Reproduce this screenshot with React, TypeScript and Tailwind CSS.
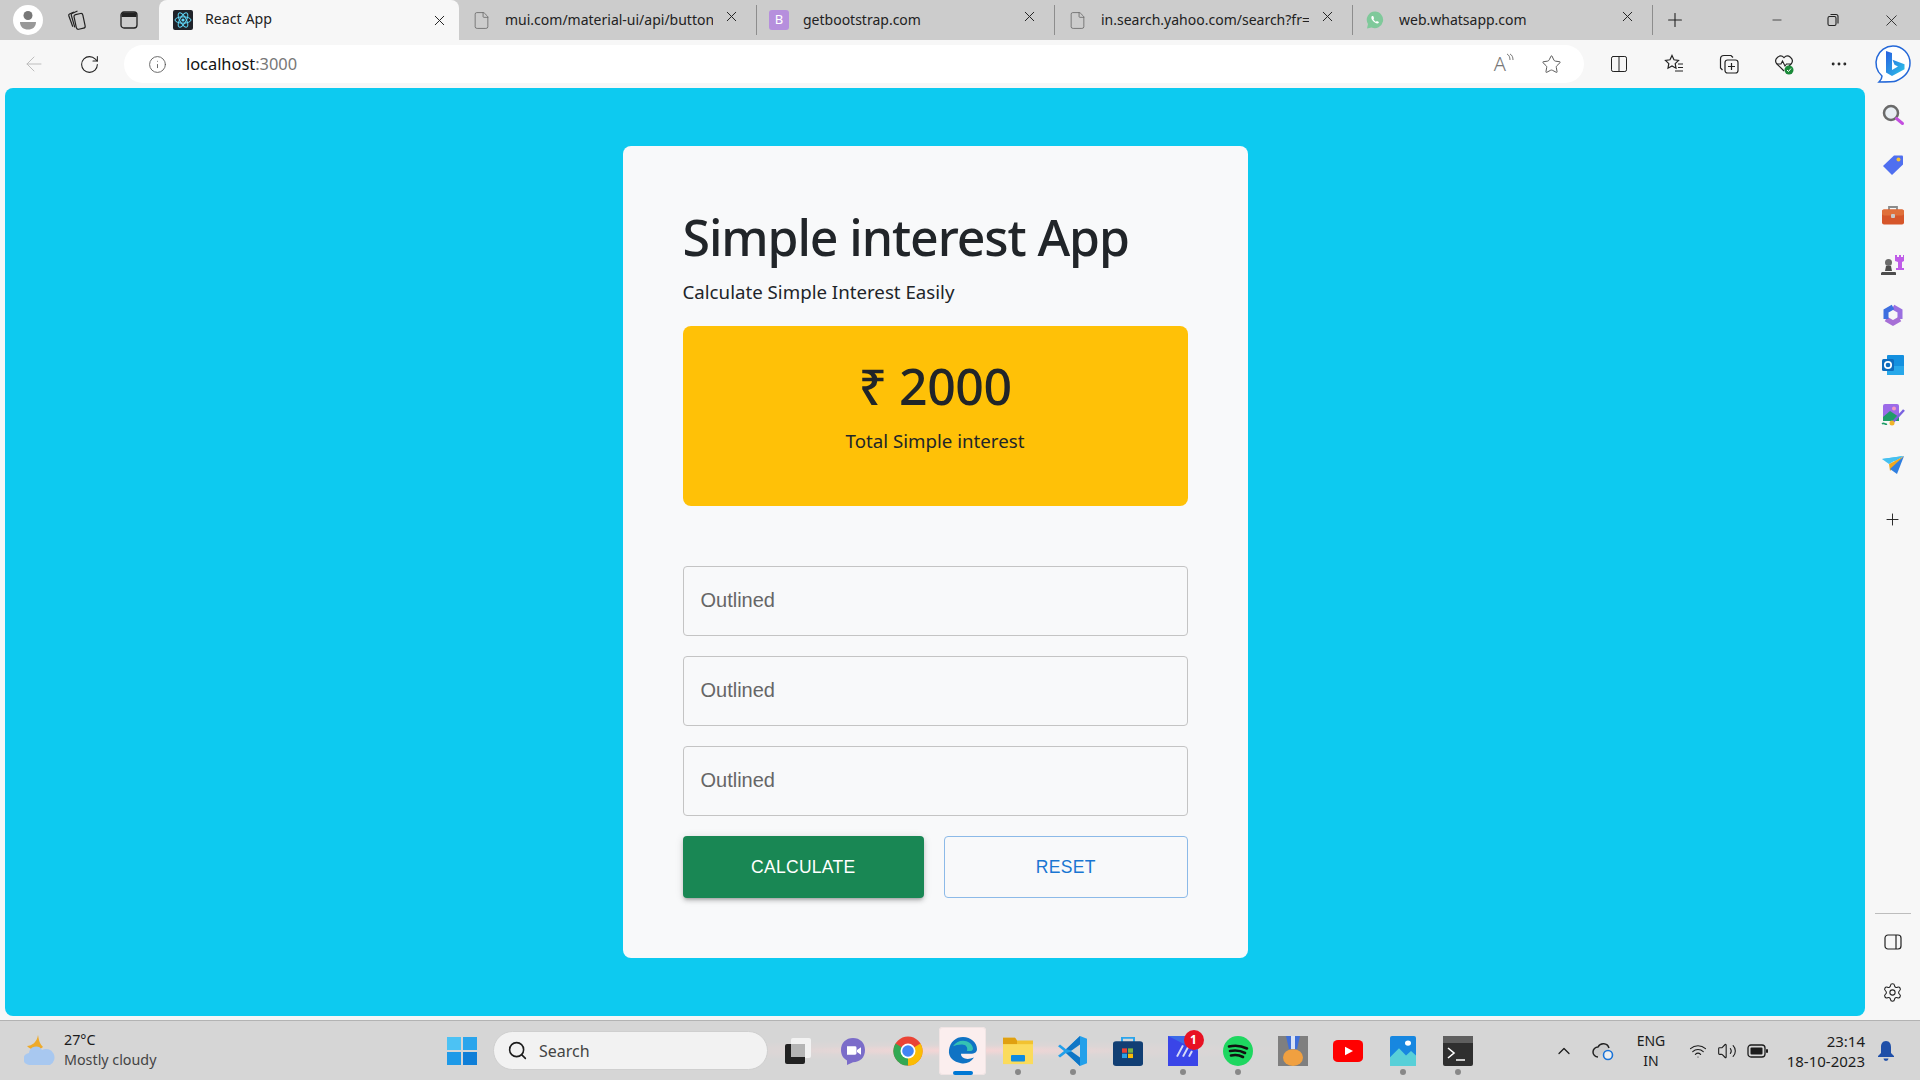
import { ArrowLeft, RotateCw, Info, Star, X, Plus, Minus, File, Search, ChevronUp, Wifi, Volume2, Settings, Ellipsis, Columns2 } from "lucide-react";

const ui = "font-['Noto_Sans',sans-serif]";

function ReactLogo() {
  return (
    <svg width="20" height="20" viewBox="0 0 20 20">
      <rect width="20" height="20" rx="2" fill="#20232a" />
      <g fill="none" stroke="#61dafb" strokeWidth="1">
        <ellipse cx="10" cy="10" rx="8" ry="3.2" />
        <ellipse cx="10" cy="10" rx="8" ry="3.2" transform="rotate(60 10 10)" />
        <ellipse cx="10" cy="10" rx="8" ry="3.2" transform="rotate(120 10 10)" />
      </g>
      <circle cx="10" cy="10" r="1.6" fill="#61dafb" />
    </svg>
  );
}

function WhatsappLogo() {
  return (
    <svg width="20" height="20" viewBox="0 0 20 20">
      <path d="M10 1.500a8.300 8.300 0 0 0-7 12.600L2 18.500l4.500-1.100A8.300 8.300 0 1 0 10 1.500z" fill="#7fc99a" />
      <path d="M7 6c-1 1-.9 2.700.6 4.600 1.500 1.800 3.300 3 4.900 2.900.8-.1 1.400-.8 1.400-1.500l-2-1-.9.8c-1-.4-2-1.400-2.600-2.600l.7-.9-.9-2.200z" fill="#fff" />
    </svg>
  );
}

function Tab({ label, icon, wide }: { label: string; icon: React.ReactNode; wide?: boolean }) {
  return (
    <div className={`flex h-[40px] items-center border-r border-[#8d8d8d] [border-image:linear-gradient(transparent_15%,#8d8d8d_15%,#8d8d8d_85%,transparent_85%)_1] pl-[12px] pr-[16px] ${wide ? "w-[300px]" : "w-[298px]"}`}>
      <div className="flex w-[20px] justify-center">{icon}</div>
      <span className="mb-[2px] ml-[14px] w-[208px] overflow-hidden whitespace-nowrap text-[14px] text-[#222]">{label}</span>
      <X size={17} strokeWidth={1.4} className="-mt-[8px] ml-auto text-[#222]" />
    </div>
  );
}

function TabStrip() {
  const doc = <File size={19} strokeWidth={1.1} className="text-[#6d6d6d]" />;
  return (
    <div className="flex h-[40px] items-center bg-[#cccccc]">
      <div className="flex w-[159px] items-center pl-[13px]">
        <div className="flex h-[30px] w-[30px] items-center justify-center rounded-full bg-white">
          <svg width="18" height="22" viewBox="0 0 18 22">
            <circle cx="9" cy="6.500" r="4.500" fill="#777" />
            <path d="M1 13h16c0 5-3.500 7.500-8 7.500S1 18 1 13z" fill="#999" />
          </svg>
        </div>
        <svg width="22" height="22" viewBox="0 0 22 22" fill="none" stroke="#222" strokeWidth="1.200" className="ml-[23px]">
          <rect x="9" y="5" width="9" height="15" rx="2" transform="rotate(-12 13 12)" />
          <path d="M8 3 3.500 5c-.8.4-1 1-.7 1.800l4 11" />
          <path d="M11.500 2 6 4.500c-.8.4-1 1-.7 1.800l3.500 12" />
        </svg>
        <svg width="20" height="20" viewBox="0 0 20 20" className="ml-[31px]">
          <rect x="2" y="2" width="16" height="16" rx="3" fill="none" stroke="#222" strokeWidth="1.300" />
          <path d="M2.500 7V5a2.500 2.500 0 0 1 2.500-2.500h10A2.500 2.500 0 0 1 17.500 5v2z" fill="#222" />
        </svg>
      </div>
      <div className="flex h-[40px] w-[300px] items-center rounded-t-[8px] bg-[#f7f7f7] pl-[14px] pr-[11px]">
        <ReactLogo />
        <span className="mb-[2px] ml-[12px] text-[14.200px] text-[#222]">React App</span>
        <X size={17} strokeWidth={1.4} className="ml-auto text-[#222]" />
      </div>
      <Tab label="mui.com/material-ui/api/button" icon={doc} />
      <Tab
        label="getbootstrap.com"
        icon={<div className="flex h-[20px] w-[20px] items-center justify-center rounded-[3px] bg-[#b68fdd] text-[13px] text-white">B</div>}
      />
      <Tab label="in.search.yahoo.com/search?fr=" icon={doc} />
      <Tab label="web.whatsapp.com" icon={<WhatsappLogo />} wide />
      <Plus size={22} strokeWidth={1.200} className="ml-[11px] text-[#222]" />
      <div className="ml-auto flex items-center text-[#222]">
        <Minus size={14} strokeWidth={1.300} className="mr-[42px]" />
        <svg width="14" height="14" viewBox="0 0 14 14" fill="none" stroke="#222" strokeWidth="1.100" className="mr-[42px]">
          <rect x="2" y="3.500" width="8" height="9" rx="1.500" />
          <path d="M4.500 1.500h5.500a2 2 0 0 1 2 2v7" />
        </svg>
        <X size={19} strokeWidth={1.100} className="mr-[19px]" />
      </div>
    </div>
  );
}

function ToolSlot({ children }: { children: React.ReactNode }) {
  return <div className="flex w-[55px] items-center justify-center">{children}</div>;
}

function Toolbar() {
  return (
    <div className="flex h-[48px] items-center bg-[#f7f7f7]">
      <ArrowLeft size={24} strokeWidth={1} className="ml-[22px] text-[#bdbdbd]" />
      <RotateCw size={21} strokeWidth={1.200} className="ml-[33px] text-[#222]" />
      <div className="ml-[24px] flex h-[38px] w-[1462px] items-center rounded-full bg-white pl-[24px] pr-[22px]">
        <Info size={19} strokeWidth={1.100} className="text-[#555]" />
        <span className="ml-[19px] text-[16.400px] text-[#111]">
          localhost<span className="text-[#777]">:3000</span>
        </span>
        <div className="ml-auto flex items-start text-[#777]">
          <span className="text-[20px] leading-[22px] font-light">A</span>
          <svg width="8" height="12" viewBox="0 0 8 12" fill="none" stroke="#777" strokeWidth="1">
            <path d="M1 1c2 1 3 3 3 6M4 1c2 1 3 3 3 6" />
          </svg>
        </div>
        <Star size={21} strokeWidth={1.100} className="ml-[27px] text-[#555]" />
      </div>
      <div className="ml-[7px] flex items-center">
        <ToolSlot>
          <Columns2 size={20} strokeWidth={1.200} className="text-[#222]" />
        </ToolSlot>
        <ToolSlot>
          <svg width="22" height="22" viewBox="0 0 22 22" fill="none" stroke="#222" strokeWidth="1.200">
            <path d="m9 2.500 2 4.300 4.500.6-3.300 3.200.8 4.600L9 13l-4 2.200.8-4.600L2.500 7.400 7 6.800z" />
            <path d="M15 11h5M15 14.500h5M12 18h8" />
          </svg>
        </ToolSlot>
        <ToolSlot>
          <svg width="22" height="22" viewBox="0 0 22 22" fill="none" stroke="#222" strokeWidth="1.200">
            <rect x="7" y="7" width="13" height="13" rx="2.500" />
            <path d="M13.500 10v7M10 13.500h7M15 4.500 13 2.500H6A3.500 3.500 0 0 0 2.500 6v9l2 2" />
          </svg>
        </ToolSlot>
        <ToolSlot>
          <svg width="24" height="24" viewBox="0 0 24 24" fill="none">
            <path d="M12 19 4.500 11.500A4.800 4.800 0 0 1 12 5.600a4.800 4.800 0 0 1 7.500 5.900L17 14" stroke="#222" strokeWidth="1.200" />
            <path d="M5 12h4l1.500-3 2.500 5 1.500-2h4" stroke="#222" strokeWidth="1.100" />
            <circle cx="17" cy="18" r="4.500" fill="#1b8a3a" />
            <path d="m15 18 1.500 1.500 2.500-3" stroke="#fff" strokeWidth="1" />
          </svg>
        </ToolSlot>
        <ToolSlot>
          <Ellipsis size={20} strokeWidth={1.500} className="text-[#222]" />
        </ToolSlot>
        <div className="-ml-[1px] flex w-[55px] items-center justify-center">
          <svg width="40" height="40" viewBox="0 0 40 40">
            <defs>
              <linearGradient id="bingB" x1="0" y1="0" x2="1" y2="1">
                <stop offset="0" stopColor="#2a5fe0" />
                <stop offset="1" stopColor="#2cc8e8" />
              </linearGradient>
            </defs>
            <path d="M20 2a17 17 0 0 1 17 17c0 9-7 15-14 18-2 1-9 1-17 1 2-2 3-4 3-6A17 17 0 0 1 20 2z" fill="#fff" stroke="#2468d8" strokeWidth="1.500" />
            <path d="M13 7l6 2v17l6-3.500-3.500-1.700-2-5 12 4.500v5L19 32l-6-3.500z" fill="url(#bingB)" />
          </svg>
        </div>
      </div>
    </div>
  );
}

function SidebarIcons() {
  return (
    <div className="flex flex-col items-center pt-[2px]">
      <div className="flex h-[50px] items-center">
        <svg width="24" height="24" viewBox="0 0 24 24" fill="none">
          <circle cx="10" cy="10" r="7" stroke="#6a6a6a" strokeWidth="2.500" fill="#e8eef3" />
          <path d="m15.500 15.500 6 5" stroke="#c44fe0" strokeWidth="3" strokeLinecap="round" />
        </svg>
      </div>
      <div className="flex h-[50px] items-center">
        <svg width="22" height="22" viewBox="0 0 22 22">
          <path d="M12 1.500h8a1 1 0 0 1 1 1v8L10 21 1 12z" fill="#4f6ff0" />
          <circle cx="16.500" cy="5.500" r="2" fill="#f3c13a" />
        </svg>
      </div>
      <div className="flex h-[50px] items-center">
        <svg width="24" height="22" viewBox="0 0 24 22">
          <path d="M8 6V3h8v3" fill="none" stroke="#8b8b8b" strokeWidth="1.800" />
          <rect x="1" y="5.500" width="22" height="15" rx="2" fill="#d6562a" />
          <rect x="1" y="5.500" width="22" height="6" rx="2" fill="#e0703a" />
          <rect x="10" y="10" width="4" height="4" rx="1" fill="#c8c8c8" />
        </svg>
      </div>
      <div className="flex h-[50px] items-center">
        <svg width="24" height="24" viewBox="0 0 24 24">
          <circle cx="7.500" cy="9.500" r="3.500" fill="#6b6b6b" />
          <path d="M5 13h5l1 5H4zM1 19h13a1 1 0 0 1 1 1v2H0v-2z" fill="#4d4d4d" />
          <path d="M14 2h2v2h2V2h2v2h2V2h1v6l-2 1v6h2v2h-8v-2h2V9l-3-1z" fill="#bf5ce8" />
        </svg>
      </div>
      <div className="flex h-[50px] items-center">
        <svg width="22" height="24" viewBox="0 0 22 24" fill="none">
          <path d="M11 4 18 8v8" stroke="#9a6fe0" strokeWidth="5" />
          <path d="M18 16 11 20 4 16" stroke="#a66fd6" strokeWidth="5" />
          <path d="M4 16V8l7-4" stroke="#3d6fe0" strokeWidth="5" />
        </svg>
      </div>
      <div className="flex h-[50px] items-center">
        <svg width="24" height="22" viewBox="0 0 24 22">
          <rect x="6" y="1" width="17" height="20" rx="1" fill="#1490df" />
          <path d="M6 12h17v9H6z" fill="#28a8ea" />
          <rect x="1" y="5" width="12" height="12" rx="1.500" fill="#0f6cbd" />
          <circle cx="7" cy="11" r="3.200" fill="none" stroke="#fff" strokeWidth="1.700" />
        </svg>
      </div>
      <div className="flex h-[50px] items-center">
        <svg width="24" height="24" viewBox="0 0 24 24">
          <rect x="2" y="1" width="16" height="17" rx="2" fill="#9c6ae8" />
          <path d="M2 14 9 8l9 6v4H2z" fill="#1f9d68" />
          <circle cx="13" cy="5.500" r="2" fill="#f49ac1" />
          <path d="M12 19 23 7" stroke="#7a62e0" strokeWidth="2.500" />
          <circle cx="11" cy="20" r="2.500" fill="#f0b429" />
          <path d="M1 21c2-2 3 1 5 0" stroke="#1f9d68" strokeWidth="1.500" fill="none" />
        </svg>
      </div>
      <div className="flex h-[50px] items-center">
        <svg width="24" height="20" viewBox="0 0 24 20">
          <path d="M1 4 23 1l-9 5z" fill="#39b5ec" />
          <path d="M23 1 14 6 8 9 9 16z" fill="#f0a81f" />
          <path d="M23 1 16 19l-7-5z" fill="#2f7fe0" />
          <path d="M1 4 8 9l14-8z" fill="#45c1f0" />
        </svg>
      </div>
      <div className="flex h-[58px] items-center">
        <Plus size={19} strokeWidth={1.200} className="text-[#222]" />
      </div>
    </div>
  );
}

function Field() {
  return (
    <div className="flex h-[70px] items-center rounded-[4px] border border-[#c4c4c4] pb-[2px] pl-[17px] font-['Liberation_Sans',sans-serif] text-[20px] text-[#666]">
      Outlined
    </div>
  );
}

function Card() {
  return (
    <div className="flex w-[625px] flex-col rounded-[8px] bg-[#f8f9fa] p-[60px] text-[#212529]">
      <h1 className="text-[50px] leading-[62px] font-medium tracking-[-1.100px]">Simple interest App</h1>
      <p className="mt-[9px] text-[18.700px] leading-[30px]">Calculate Simple Interest Easily</p>
      <div className="mt-[19px] flex h-[180px] flex-col items-center rounded-[8px] bg-[#ffc107] pt-[30px]">
        <div className="text-[50px] leading-[60px] font-medium tracking-[-0.500px]">₹ 2000</div>
        <div className="mt-[10px] text-[18.700px] leading-[30px]">Total Simple interest</div>
      </div>
      <div className="mt-[60px] flex flex-col gap-[20px]">
        <Field />
        <Field />
        <Field />
      </div>
      <div className="mt-[20px] flex gap-[20px] font-['Liberation_Sans',sans-serif] text-[17.500px] tracking-[0.300px]">
        <button className="flex h-[62px] flex-1 items-center justify-center rounded-[4px] bg-[#198754] text-white shadow-[0_3px_3px_-2px_rgba(0,0,0,.2),0_3px_4px_0_rgba(0,0,0,.14),0_1px_8px_0_rgba(0,0,0,.12)]">
          CALCULATE
        </button>
        <button className="flex h-[62px] flex-1 items-center justify-center rounded-[4px] border border-[#8cbae8] text-[#1976d2]">RESET</button>
      </div>
    </div>
  );
}

function Slot({ children, active, dot }: { children: React.ReactNode; active?: boolean; dot?: boolean }) {
  return (
    <div className="relative flex h-[50px] w-[55px] items-center justify-center">
      {active && <span className="absolute h-[48px] w-[47px] rounded-[4px] bg-[#fbeeee] shadow-[inset_0_0_0_1px_#f0e4e4]" />}
      <div className="relative flex items-center justify-center">{children}</div>
      {dot && <span className="absolute bottom-[1px] h-[6px] w-[6px] rounded-full bg-[#888]" />}
      {active && <span className="absolute bottom-[1px] h-[4px] w-[20px] rounded-full bg-[#0078d4]" />}
    </div>
  );
}

function Taskbar() {
  return (
    <div className="flex h-[60px] items-center border-t border-[#b3b3b3] bg-[radial-gradient(ellipse_at_963px_50%,#f6d5d5_0,#dcd6d6_180px,#d6d6d6_340px)] text-[#1c1c1c]">
      <div className="flex w-[447px] items-center pl-[24px]">
        <svg width="32" height="32" viewBox="0 0 32 32">
          <path d="M14 0c1 6 2 9 5 12-5 5-13 3-16-1 5 0 10-4 11-11z" fill="#eeaa2a" />
          <path d="M6 30a6 6 0 0 1-1-12 7 7 0 0 1 13-3 7.500 7.500 0 0 1 8 15z" fill="#a8c8f0" />
        </svg>
        <div className="mb-[2px] ml-[8px] text-[14.300px] leading-[20px]">
          <div>27°C</div>
          <div className="text-[#444]">Mostly cloudy</div>
        </div>
      </div>
      <div className="flex w-[46px] justify-start">
        <svg width="30" height="30" viewBox="0 0 30 30">
          <path d="M0 1h14v13H0z" fill="#4cc2f4" />
          <path d="M16 1h14v13H16z" fill="#2aa5ec" />
          <path d="M0 16h14v13H0z" fill="#1e9ae8" />
          <path d="M16 16h14v13H16z" fill="#0f7fd8" />
        </svg>
      </div>
      <div className="flex h-[39px] w-[275px] items-center rounded-full border border-[#cfcfcf] bg-[#f2f2f2] pl-[13px] text-[16px] text-[#444]">
        <Search size={21} strokeWidth={1.800} className="text-[#1c1c1c]" />
        <span className="ml-[11px]">Search</span>
      </div>
      <div className="ml-[2px] flex items-center">
        <Slot>
          <svg width="30" height="30" viewBox="0 0 30 30">
            <rect x="8" y="2" width="20" height="20" rx="2" fill="#f2f2f2" />
            <rect x="2" y="8" width="20" height="20" rx="2" fill="#222" />
            <rect x="8" y="8" width="14" height="13" fill="#b5b5b5" />
          </svg>
        </Slot>
        <Slot>
          <svg width="30" height="30" viewBox="0 0 30 32" preserveAspectRatio="none">
            <path d="M15 2c7 0 12 5 12 13s-5 13-12 13l-6 3v-5C5 24 3 20 3 15 3 7 8 2 15 2z" fill="#7b6cc9" />
            <path d="M9 11h8a1.500 1.500 0 0 1 1.500 1.500v6A1.500 1.500 0 0 1 17 20H9zM19 15l4-3v8l-4-3z" fill="#fff" />
          </svg>
        </Slot>
        <Slot>
          <svg width="30" height="30" viewBox="0 0 30 30">
            <circle cx="15" cy="15" r="14.500" fill="#ea4335" />
            <path d="M15 15 27.500 7.500A14.500 14.500 0 0 1 15 29.500z" fill="#fbbc05" />
            <path d="M15 15 15 29.500A14.500 14.500 0 0 1 2.500 7.500z" fill="#34a853" />
            <circle cx="15" cy="15" r="7.500" fill="#fff" />
            <circle cx="15" cy="15" r="5.800" fill="#4285f4" />
          </svg>
        </Slot>
        <Slot active>
          <svg width="30" height="30" viewBox="0 0 30 32" preserveAspectRatio="none">
            <path d="M1 15C2 6 8 1 15 1c8 0 14 6 14 13 0 4-4 5-8 5h-8c0 5 6 7 13 4-3 5-8 7-13 6C6 28 0 23 1 15z" fill="#0f73c4" />
            <path d="M5 11c2-4 6-6 10-6 5 0 9 3 10 8 0 2-1 3-3 3h-3c1-4-1-7-5-7-4 0-7 1-9 2z" fill="#35c1b3" />
          </svg>
        </Slot>
        <Slot dot>
          <svg width="30" height="29" viewBox="0 0 30 32" preserveAspectRatio="none">
            <path d="M0 2h12l2 3h16v26H0z" fill="#f2c230" />
            <path d="M0 2h12l2 3v4H0z" fill="#e0a010" />
            <path d="M0 9h30v22H0z" fill="#fbdb5c" />
            <rect x="8" y="21" width="14" height="7" rx="1" fill="#0f8be0" />
          </svg>
        </Slot>
        <Slot dot>
          <svg width="30" height="30" viewBox="0 0 30 32" preserveAspectRatio="none">
            <path d="M29 3v26l-7 3L8 18 2 23 0 21l6-5-6-5 2-2 6 5L22 0z" fill="#23a0ea" />
            <path d="M22 0v32l-14-14 8-2-8-2z" fill="#0f76c6" />
            <path d="M22 9v14l-9-7z" fill="#d6d6d6" />
          </svg>
        </Slot>
        <Slot>
          <svg width="30" height="30" viewBox="0 0 30 34" preserveAspectRatio="none">
            <path d="M9 7V2h12v5" fill="none" stroke="#2aa5ec" strokeWidth="2" />
            <rect x="0" y="6" width="30" height="28" rx="3" fill="#123f74" />
            <path d="M9 14h5v5H9z" fill="#ea4335" />
            <path d="M15 14h5v5h-5z" fill="#7cb342" />
            <path d="M9 20h5v5H9z" fill="#29a1e8" />
            <path d="M15 20h5v5h-5z" fill="#fbbc05" />
          </svg>
        </Slot>
        <Slot dot>
          <div className="relative">
            <svg width="30" height="30" viewBox="0 0 30 32" preserveAspectRatio="none">
              <rect width="30" height="32" fill="#3a45e8" />
              <path d="M0 0h30v16z" fill="#3a6ae8" />
              <path d="M9 22 15 10M15 22l6-12M21 22l3-6" stroke="#d5d9f8" strokeWidth="2" />
            </svg>
            <span className="absolute -top-[6px] -right-[6px] flex h-[20px] w-[20px] items-center justify-center rounded-full bg-[#e81123] text-[12px] font-bold text-white">1</span>
          </div>
        </Slot>
        <Slot dot>
          <svg width="30" height="30" viewBox="0 0 30 30" fill="none">
            <circle cx="15" cy="15" r="15" fill="#1ed760" />
            <path d="M6 10.500c6-1.500 12-1 18 2M7 15c5-1 10-.8 15 2M8 19.500c4-1 8-.7 12 1.500" stroke="#111" strokeWidth="2.600" strokeLinecap="round" />
          </svg>
        </Slot>
        <Slot>
          <svg width="30" height="30" viewBox="0 0 30 32" preserveAspectRatio="none">
            <rect width="30" height="32" fill="#7f7f7f" />
            <path d="M8 0h14l-3 14h-8z" fill="#3f6fd8" />
            <path d="M13 0h4v14h-4z" fill="#d8e2f5" />
            <ellipse cx="15" cy="23" rx="10" ry="9" fill="#f0a040" />
          </svg>
        </Slot>
        <Slot>
          <svg width="30" height="22" viewBox="0 0 30 26" preserveAspectRatio="none">
            <rect width="30" height="26" rx="5" fill="#f00" />
            <path d="m12 8 8 5-8 5z" fill="#fff" />
          </svg>
        </Slot>
        <Slot dot>
          <svg width="26" height="30" viewBox="0 0 26 34" preserveAspectRatio="none">
            <rect width="26" height="34" rx="2" fill="#1787e0" />
            <path d="M0 34V24L9 14l7 8 5-5 5 5v12z" fill="#58d0d8" />
            <circle cx="18" cy="8" r="3" fill="#fff" />
          </svg>
        </Slot>
        <Slot dot>
          <svg width="30" height="30" viewBox="0 0 30 30" fill="none">
            <rect width="30" height="30" rx="2" fill="#2f2f2f" />
            <rect width="30" height="7" fill="#5f5f5f" />
            <path d="m5 12 6 5-6 5M13 24h9" stroke="#fff" strokeWidth="1.600" />
          </svg>
        </Slot>
      </div>
      <div className="ml-[69px] flex items-center">
        <ChevronUp size={20} strokeWidth={1.500} />
        <svg width="24" height="24" viewBox="0 0 24 24" fill="none" className="ml-[18px]">
          <path d="M6 18a5 5 0 0 1 0-10 6 6 0 0 1 11 1" stroke="#222" strokeWidth="1.500" fill="#ccc" />
          <circle cx="16" cy="16" r="4.500" stroke="#1a73d8" strokeWidth="1.600" fill="#eee" />
        </svg>
        <div className="ml-[19px] flex w-[32px] flex-col items-center text-[14px] leading-[20px]">
          <span>ENG</span>
          <span>IN</span>
        </div>
        <Wifi size={18} strokeWidth={1.500} className="ml-[22px]" />
        <Volume2 size={20} strokeWidth={1.300} className="ml-[10px]" />
        <svg width="22" height="16" viewBox="0 0 22 16" className="ml-[10px]">
          <rect x="1" y="2" width="17" height="12" rx="3" fill="none" stroke="#1c1c1c" strokeWidth="1.300" />
          <rect x="3.500" y="4.500" width="12" height="7" rx="1" fill="#1c1c1c" />
          <rect x="19" y="6" width="2" height="4" rx="1" fill="#1c1c1c" />
        </svg>
      </div>
      <div className="ml-auto flex items-center pr-[25px]">
        <div className="text-right text-[15px] leading-[20px]">
          <div>23:14</div>
          <div>18-10-2023</div>
        </div>
        <svg width="18" height="22" viewBox="0 0 18 22" className="ml-[12px]">
          <path d="M9 1c3.500 0 5 3 5 6v6l3 3v1H1v-1l3-3V7c0-3 1.500-6 5-6z" fill="#1f4fa8" />
          <path d="M6.500 18.500h5a2.500 2.500 0 0 1-5 0z" fill="#1f4fa8" />
        </svg>
      </div>
    </div>
  );
}

export default function App() {
  return (
    <div className={`flex h-screen w-screen flex-col overflow-hidden ${ui}`}>
      <TabStrip />
      <Toolbar />
      <div className="flex flex-1 bg-[#f7f7f7]">
        <div className="mb-[4px] ml-[5px] flex w-[1860px] items-center justify-center rounded-[8px] bg-[#0dcaf0]">
          <Card />
        </div>
        <div className="flex flex-1 flex-col items-center">
          <SidebarIcons />
          <div className="mt-auto mb-[3px] h-px w-[36px] bg-[#bdbdbd]" />
          <div className="flex h-[50px] items-center">
            <svg width="18" height="16" viewBox="0 0 18 16" fill="none" stroke="#222" strokeWidth="1.200">
              <rect x="1" y="1" width="16" height="14" rx="3" />
              <path d="M12 1v14" />
            </svg>
          </div>
          <div className="mb-[3px] flex h-[50px] items-center">
            <Settings size={21} strokeWidth={1.200} className="text-[#222]" />
          </div>
        </div>
      </div>
      <Taskbar />
    </div>
  );
}
